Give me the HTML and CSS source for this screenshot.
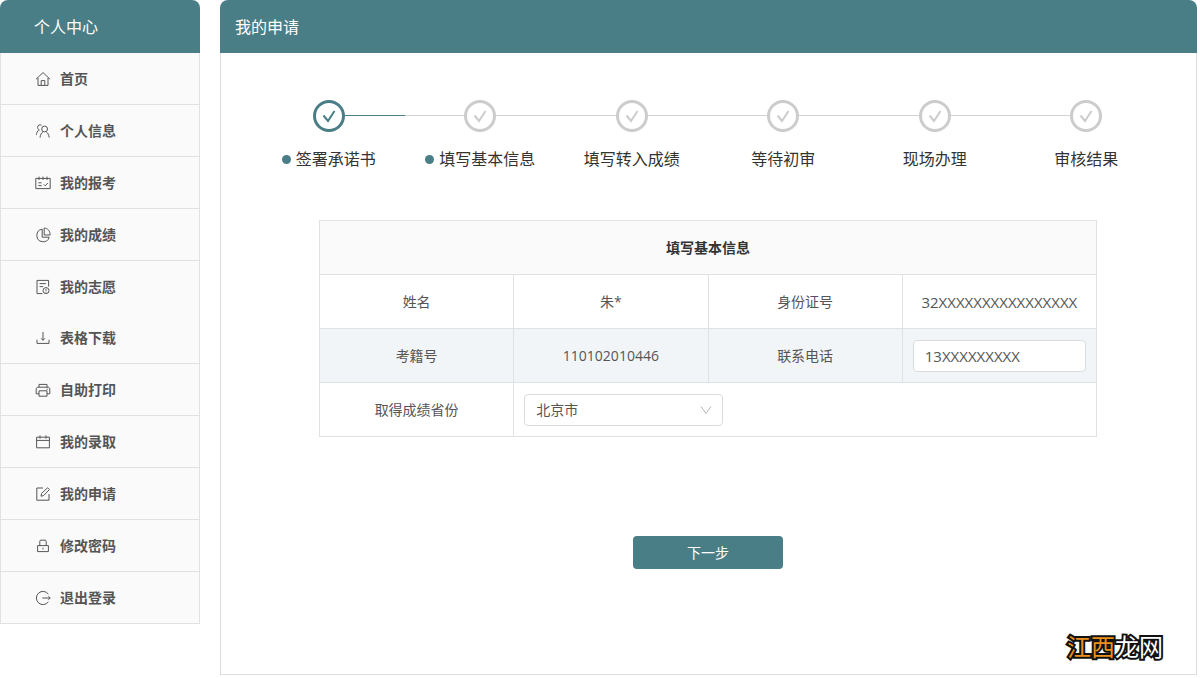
FILE: index.html
```html
<!DOCTYPE html>
<html lang="zh-CN">
<head>
<meta charset="utf-8">
<meta name="viewport" content="width=device-width, initial-scale=1">
<title>我的申请</title>
<link rel="stylesheet" href="styles.css">
</head>
<body>
<div class="layout">
  <aside class="sidebar">
    <h2 class="bar bar-side">个人中心</h2>
    <nav class="menu" aria-label="个人中心">
      <a class="menu-item" href="#"><svg class="icon" viewBox="0 0 16 16"><path d="M1 8.2 8 1.6l7 6.6M3 7v7.4h10V7M6.2 14.2V9.6h3.6v4.6"/></svg>首页</a>
      <a class="menu-item" href="#"><svg class="icon" viewBox="0 0 16 16"><circle cx="9.6" cy="6" r="2.9"/><path d="M5 14.6c.3-2.700 1.300-4.600 3-5.900M11.200 8.700c1.700 1.300 2.700 3.200 3 5.900M6.600 2.300C4.800 1 2.600 2.200 2.600 4.300c0 1.500.9 2.400 2 2.800M1.400 11.800c.2-2 .9-3.500 2.300-4.700"/></svg>个人信息</a>
      <a class="menu-item" href="#"><svg class="icon" viewBox="0 0 16 16"><path d="M.8 3.400h14.400v10.200H.8zM4 1.600v3.400M8 1.600v3.400M12 1.600v3.400M3.400 7.800h3.200M3.400 10.600h3.200M8.800 9.400l1.400 1.400 2.600-2.800"/></svg>我的报考</a>
      <a class="menu-item" href="#"><svg class="icon" viewBox="0 0 16 16"><path d="M7.200 2.200a6.300 6.300 0 1 0 7 8H7.200zM9.200 1v7h5.900C15.300 4.200 12.800 1.300 9.200 1z"/></svg>我的成绩</a>
      <a class="menu-item" href="#"><svg class="icon" viewBox="0 0 16 16"><path d="M7.400 14.600H2V1.400h11.600v6.200M4.600 4.600h6.200M4.600 7.600h3.600"/><circle cx="11" cy="11.600" r="3"/><path d="M11 10v1.800M11 12.600v.8"/></svg>我的志愿</a>
      <a class="menu-item" href="#"><svg class="icon" viewBox="0 0 16 16"><path d="M8 2v8M6.200 8.400 8 10.400l1.800-2M2 9.800v3.600h12V9.800"/></svg>表格下载</a>
      <a class="menu-item" href="#"><svg class="icon" viewBox="0 0 16 16"><path d="M4 5.200V2.400h8v2.800M4 11.800H1.200V7c0-1 .8-1.800 1.800-1.800h10c1 0 1.800.8 1.800 1.800v4.800H12M4 8.800h8v5.400H4zM11.600 7.200h1.200"/></svg>自助打印</a>
      <a class="menu-item" href="#"><svg class="icon" viewBox="0 0 16 16"><path d="M1.600 3.200h12.800v10.600H1.600zM1.600 6.400h12.800M5 1.400v3.200M11 1.400v3.200"/></svg>我的录取</a>
      <a class="menu-item" href="#"><svg class="icon" viewBox="0 0 16 16"><path d="M8 2H1.800v12.200H14V8M6 10.200l.6-2.800 6-5.600 1.800 1.800-5.800 6z"/></svg>我的申请</a>
      <a class="menu-item" href="#"><svg class="icon" viewBox="0 0 16 16"><path d="M2.600 7.600h10.800v6H2.600zM4.800 7.600V3.200c0-.6.4-1 1-1h4.400c.6 0 1 .4 1 1v4.400M8 9.800v1.600"/></svg>修改密码</a>
      <a class="menu-item" href="#"><svg class="icon" viewBox="0 0 16 16"><path d="M13.400 4.200a6.600 6.600 0 1 0 0 7.600M7.400 8h7.800M13.400 6.400 15.200 8l-1.800 1.600"/></svg>退出登录</a>
    </nav>
  </aside>

  <main class="panel">
    <h1 class="bar">我的申请</h1>
    <div class="content">
      <ol class="steps">
        <li class="step step-done"><span class="step-ring"><svg class="tick" viewBox="0 0 16 16"><path d="M2.500 7.500 7 13 13.500 3"/></svg></span><span class="step-label dotted">签署承诺书</span></li>
        <li class="step"><span class="step-ring"><svg class="tick" viewBox="0 0 16 16"><path d="M2.500 7.500 7 13 13.500 3"/></svg></span><span class="step-label dotted">填写基本信息</span></li>
        <li class="step"><span class="step-ring"><svg class="tick" viewBox="0 0 16 16"><path d="M2.500 7.500 7 13 13.500 3"/></svg></span><span class="step-label">填写转入成绩</span></li>
        <li class="step"><span class="step-ring"><svg class="tick" viewBox="0 0 16 16"><path d="M2.500 7.500 7 13 13.500 3"/></svg></span><span class="step-label">等待初审</span></li>
        <li class="step"><span class="step-ring"><svg class="tick" viewBox="0 0 16 16"><path d="M2.500 7.500 7 13 13.500 3"/></svg></span><span class="step-label">现场办理</span></li>
        <li class="step"><span class="step-ring"><svg class="tick" viewBox="0 0 16 16"><path d="M2.500 7.500 7 13 13.500 3"/></svg></span><span class="step-label">审核结果</span></li>
      </ol>

      <form class="form">
        <table class="info">
          <thead>
            <tr><th colspan="4">填写基本信息</th></tr>
          </thead>
          <tbody>
            <tr><td>姓名</td><td>朱*</td><td>身份证号</td><td class="masked">32XXXXXXXXXXXXXXXX</td></tr>
            <tr class="shaded"><td>考籍号</td><td>110102010446</td><td><label for="phone">联系电话</label></td><td><input class="field masked" id="phone" type="text" value="13XXXXXXXXX"></td></tr>
            <tr><td><label for="province">取得成绩省份</label></td><td class="cell-select" colspan="3">
              <div class="select-wrap">
                <select class="field" id="province"><option>北京市</option></select>
                <svg class="chevron" viewBox="0 0 12 12"><path d="M1 2.500 6 9.500l5-7"/></svg>
              </div>
            </td></tr>
          </tbody>
        </table>
        <button class="next" type="button">下一步</button>
      </form>
    </div>
    <div class="watermark"><span class="watermark-accent">江西</span>龙网</div>
  </main>
</div>
</body>
</html>
```
FILE: styles.css
```css
* {
  box-sizing: border-box;
}

body {
  margin: 0;
  background: #fff;
  color: #555;
  font-family: "Open Sans", "Noto Sans CJK SC", sans-serif;
  font-size: 14px;
  line-height: 20px;
}

.layout {
  display: grid;
  grid-template-columns: 200px minmax(0, 1fr);
  gap: 20px;
  align-items: start;
  padding: 0 3px 3px 0;
}

.bar {
  margin: 0;
  padding: 15px 15px 14px;
  border-radius: 8px 8px 0 0;
  background: #4a7e87;
  color: #fff;
  font-size: 16px;
  font-weight: 400;
  line-height: 24px;
}

.bar-side {
  padding-left: 34px;
}

.menu {
  border: 1px solid #e0e2e2;
  border-top: 0;
  border-bottom: 0;
  background: #fafafa;
}

.menu-item {
  display: flex;
  align-items: center;
  gap: 9px;
  padding: 15px 34px;
  border-bottom: 1px solid #dfe1e1;
  color: #555;
  font-weight: 700;
  line-height: 21px;
  text-decoration: none;
}

.menu-item:nth-child(5) {
  border-bottom: 0;
}

.icon {
  width: 16px;
  height: 16px;
  fill: none;
  stroke: #555;
  stroke-width: 1;
}

.panel {
  display: flex;
  flex-direction: column;
  position: relative;
  min-height: calc(100vh - 3px);
}

.content {
  flex: 1;
  padding: 47px 34px 32px 32px;
  border: 1px solid #dcdfdf;
  border-top: 0;
}

.steps {
  display: grid;
  grid-template-columns: repeat(6, 1fr);
  margin: 0;
  padding: 0;
  list-style: none;
}

.step {
  display: flex;
  flex-direction: column;
  align-items: center;
  gap: 15px;
  color: #ccc;
  background: linear-gradient(#d2d4d4, #d2d4d4) 0 15px / 100% 1px no-repeat;
}

.step:first-child {
  background: linear-gradient(#4a7e87, #4a7e87) 100% 15px / 50% 1px no-repeat;
}

.step:last-child {
  background-size: 50% 1px;
}

.step-done {
  color: #4a7e87;
}

.step-ring {
  display: grid;
  place-items: center;
  width: 32px;
  height: 32px;
  border: 3px solid;
  border-radius: 50%;
  background: #fff;
}

.tick {
  width: 16px;
  height: 16px;
  fill: none;
  stroke: currentColor;
  stroke-width: 2;
}

.step-label {
  display: flex;
  align-items: center;
  gap: 5px;
  color: #333;
  font-size: 16px;
  line-height: 24px;
  white-space: nowrap;
}

.dotted::before {
  content: "";
  width: 9px;
  height: 9px;
  border-radius: 50%;
  background: #4a7e87;
}

.form {
  display: flex;
  flex-direction: column;
  align-items: center;
  gap: 99px;
  padding: 49px 65px 0 66px;
}

.info {
  width: 100%;
  border-collapse: collapse;
  table-layout: fixed;
}

.info th,
.info td {
  height: 54px;
  padding: 10px;
  border: 1px solid #dfe2e3;
  text-align: center;
}

.info th {
  background: #fafafa;
  color: #333;
  font-weight: 700;
}

.shaded {
  background: #f1f5f7;
}

.info .cell-select {
  text-align: left;
}

.info .masked {
  font-size: 15px;
}

.field {
  display: block;
  width: 100%;
  height: 32px;
  padding: 0 11px;
  border: 1px solid #d9dcdc;
  border-radius: 4px;
  background: #fff;
  color: #555;
  font: inherit;
  appearance: none;
}

.select-wrap {
  position: relative;
  width: 199px;
}

.chevron {
  position: absolute;
  top: 10px;
  right: 11px;
  width: 12px;
  height: 12px;
  fill: none;
  stroke: #b5b5b5;
  pointer-events: none;
}

.next {
  width: 150px;
  height: 33px;
  border: 0;
  border-radius: 4px;
  background: #4a7e87;
  color: #fff;
  font: inherit;
}

.watermark {
  position: absolute;
  right: 34px;
  bottom: 12px;
  color: #fff;
  font-size: 24px;
  font-weight: 400;
  line-height: 32px;
  -webkit-text-stroke: 4px #111;
  paint-order: stroke fill;
}

.watermark-accent {
  color: #e98f1c;
}
```
